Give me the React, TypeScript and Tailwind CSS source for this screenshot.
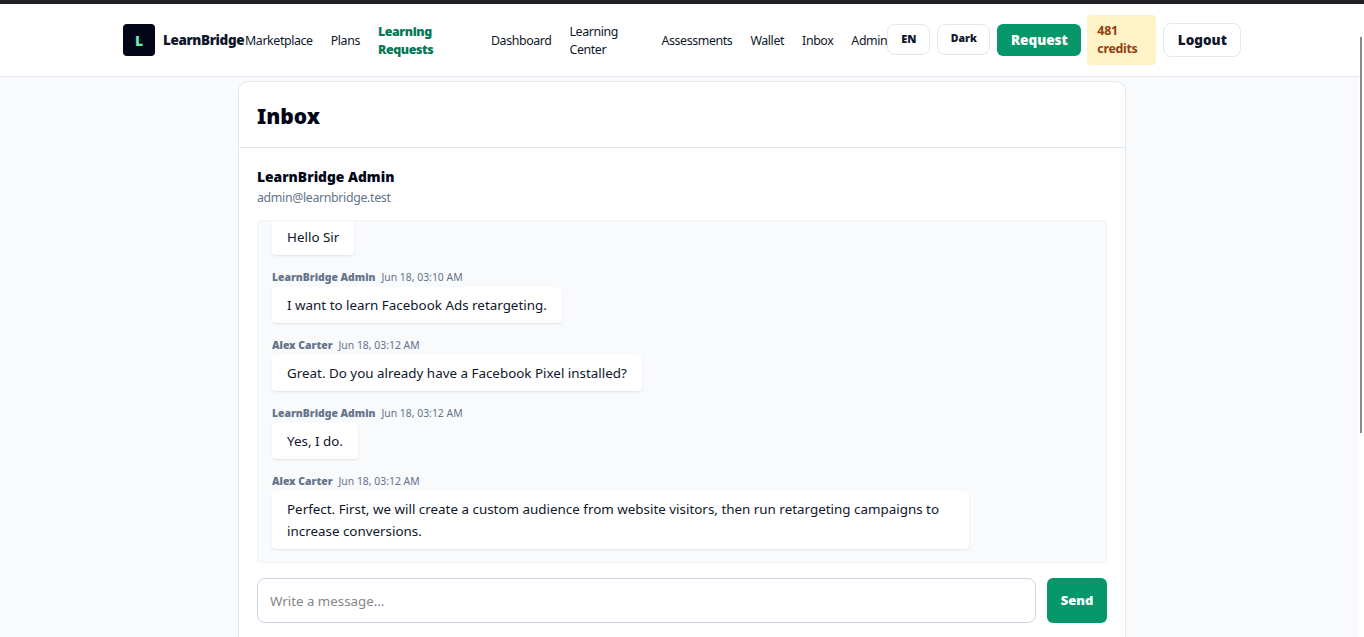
const navLinks = [
  { label: 'Marketplace' },
  { label: 'Plans' },
  { label: 'Learning Requests', active: true, width: 'w-[95px]' },
  { label: 'Dashboard' },
  { label: 'Learning Center', width: 'w-[74px]' },
  { label: 'Assessments' },
  { label: 'Wallet' },
  { label: 'Inbox' },
  { label: 'Admin' },
];

const messages = [
  { text: 'Hello Sir', noHead: true },
  { author: 'LearnBridge Admin', time: 'Jun 18, 03:10 AM', text: 'I want to learn Facebook Ads retargeting.' },
  { author: 'Alex Carter', time: 'Jun 18, 03:12 AM', text: 'Great. Do you already have a Facebook Pixel installed?' },
  { author: 'LearnBridge Admin', time: 'Jun 18, 03:12 AM', text: 'Yes, I do.' },
  {
    author: 'Alex Carter',
    time: 'Jun 18, 03:12 AM',
    text: 'Perfect. First, we will create a custom audience from website visitors, then run retargeting campaigns to increase conversions.',
  },
];

const Header = () => (
  <header className="h-[73px] shrink-0 bg-white border-b border-[#e2e8f0] flex justify-center">
    <div className="w-[1118px] flex items-center">
      <div className="flex items-center gap-2 shrink-0 w-[122px]">
        <div className="w-8 h-8 rounded-[4px] bg-[#020617] text-[#6ee7b7] flex items-center justify-center text-[14px] font-black">
          L
        </div>
        <span className="text-[13.5px] font-black tracking-[-0.4px] text-[#0f172a]">LearnBridge</span>
      </div>
      <nav className="flex items-center gap-[18px] mt-[2px] text-[12.4px] leading-[18px] tracking-[-0.4px] text-[#0f172a]">
        {navLinks.map((link) => (
          <a
            key={link.label}
            className={`${link.width ?? ''} ${link.active ? 'font-black tracking-[-0.4px] text-[#047857]' : ''}`}
          >
            {link.label}
          </a>
        ))}
      </nav>
      <div className="flex items-center shrink-0">
        <button className="w-[43px] h-[31px] mb-[2px] rounded-lg border border-[#e2e8f0] bg-white text-[11px] font-black text-[#0f172a]">
          EN
        </button>
        <button className="w-[53px] h-[31px] mb-[2px] ml-[7px] rounded-lg border border-[#e2e8f0] bg-white text-[10.5px] font-black text-[#0f172a]">
          Dark
        </button>
        <button className="w-[84px] h-8 ml-[7px] rounded-md bg-[#059669] text-white text-[13.5px] font-black">Request</button>
        <div className="w-[69px] h-[50px] ml-[6px] rounded bg-[#fef3c7] text-[#92400e] text-[12.4px] leading-[18px] tracking-[-0.3px] font-bold px-[10px] py-[7px]">
          481 credits
        </div>
        <button className="w-[78px] h-[34px] ml-[7px] rounded-lg border border-[#e2e8f0] bg-white text-[13.5px] font-black text-[#0f172a]">
          Logout
        </button>
      </div>
    </div>
  </header>
);

const MessageRow = ({ author, time, text }: { author?: string; time?: string; text: string }) => (
  <div className="flex flex-col items-start">
    {author && (
      <div className="flex items-center gap-[6px] h-[18px] mb-[1px]">
        <span className="text-[10.4px] font-black text-[#64748b]">{author}</span>
        <span className="text-[10.4px] text-[#64748b]">{time}</span>
      </div>
    )}
    <div className="max-w-[697px] bg-white rounded px-[15px] pt-[8px] pb-[6px] text-[13.4px] leading-[21.76px] text-[#0f172a] shadow-[0_1px_2px_rgba(15,23,42,0.1)]">
      {text}
    </div>
  </div>
);

export default function App() {
  return (
    <div className="relative h-[637px] overflow-hidden flex flex-col bg-[#f8fafc] font-['Noto_Sans',sans-serif]">
      <div className="h-1 shrink-0 bg-[#1f2023]" />
      <Header />
      <main className="flex justify-center pt-1">
        <section className="w-[888px] h-[600px] bg-white border border-[#e2e8f0] rounded-[10px]">
          <div className="h-[66px] border-b border-[#e2e8f0] px-[18px] pt-[4px] flex items-center">
            <h1 className="text-[21px] font-black text-[#020617]">Inbox</h1>
          </div>
          <div className="px-[18px] pt-[19px]">
            <div className="text-[13.8px] leading-[20px] font-black text-[#020617]">LearnBridge Admin</div>
            <div className="text-[12.4px] leading-[20px] pt-px -mb-px tracking-[-0.36px] text-[#64748b]">admin@learnbridge.test</div>
            <div className="mt-[13px] h-[343px] overflow-hidden flex flex-col justify-end gap-[13.24px] rounded bg-[#f8fafc] border border-[#f1f5f9] px-[14px] pb-[13px]">
              {messages.map((m) => (
                <MessageRow key={m.text} author={m.author} time={m.time} text={m.text} />
              ))}
            </div>
            <div className="mt-[15px] flex gap-[11px]">
              <input
                placeholder="Write a message..."
                className="flex-1 h-[45px] rounded-lg border border-[#cbd5e1] bg-white px-3 text-[13.3px] outline-none placeholder:text-[#858585]"
              />
              <button className="w-[60px] h-[45px] rounded-md bg-[#059669] text-white text-[13px] font-black">Send</button>
            </div>
          </div>
        </section>
      </main>
      {/* window scrollbar */}
      <div className="absolute right-0 top-1 bottom-0 w-[5px] bg-white" />
      <div className="absolute right-[2px] top-[37px] w-[2px] h-[396px] bg-[#8a8a8a]" />
    </div>
  );
}
